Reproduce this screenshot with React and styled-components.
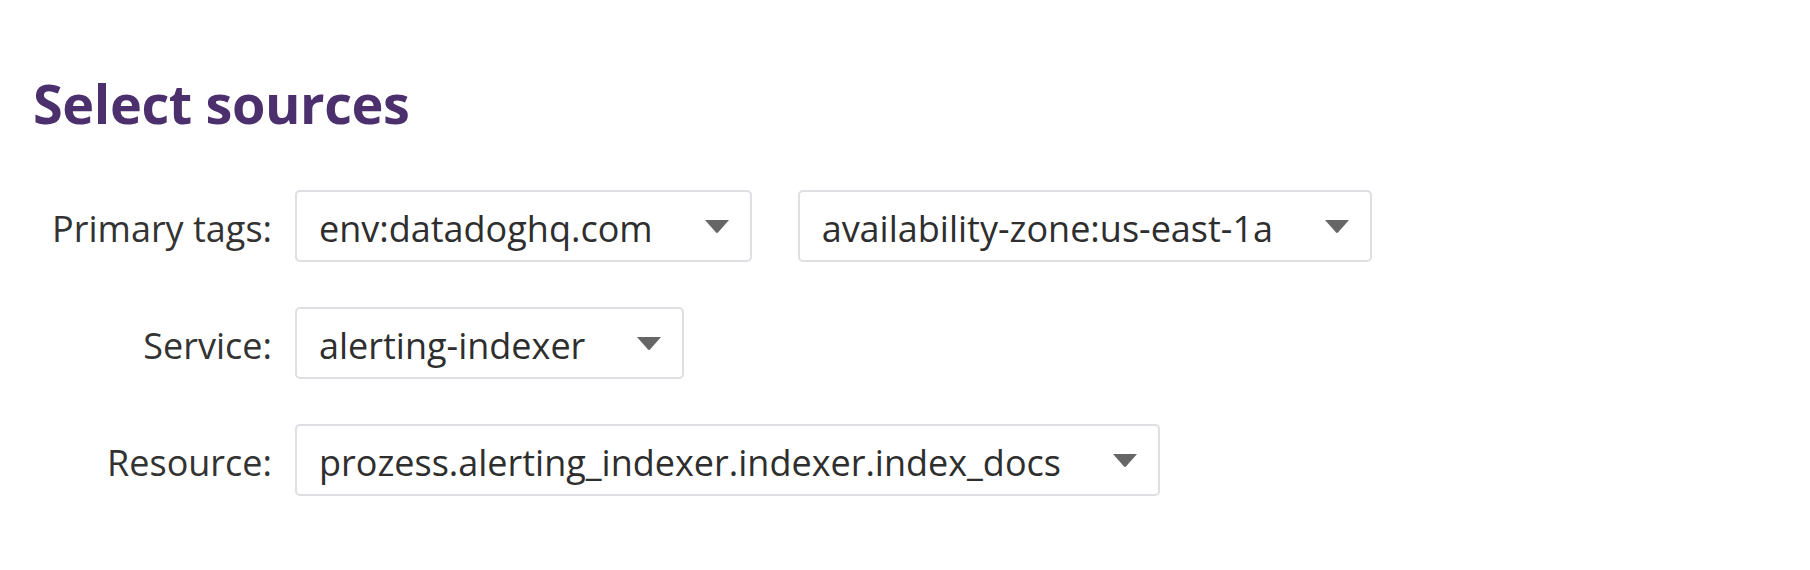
import React from 'react';
import styled, { createGlobalStyle } from 'styled-components';

const GlobalStyle = createGlobalStyle`
    body {
        margin: 0;
        background: #fff;
        font-family: 'Open Sans', 'Liberation Sans', sans-serif;
    }
`;

const Page = styled.div`
    padding: 76px 0 0 33px;
`;

const Title = styled.h2`
    margin: 0 0 60px;
    font-size: 54px;
    line-height: 1;
    font-weight: 700;
    letter-spacing: -0.4px;
    color: #4b306d;
`;

const Form = styled.div`
    display: grid;
    grid-template-columns: 239px auto;
    column-gap: 23px;
    row-gap: 45px;
    justify-content: start;
    align-items: center;
`;

const Label = styled.label`
    padding-top: 4px;
    text-align: right;
    font-size: 36px;
    color: #333;
    white-space: nowrap;
`;

const Controls = styled.div`
    display: flex;
    gap: 46px;
`;

const SelectBox = styled.div`
    display: inline-flex;
    align-items: center;
    gap: 52px;
    box-sizing: border-box;
    height: 72px;
    padding: 0 21px 0 22px;
    border: 2px solid #dfdee3;
    border-radius: 5px;
    background: #fff;
    font-size: 36px;
    color: #2e2e2e;
    white-space: nowrap;
    cursor: pointer;
`;

const Value = styled.span`
    padding-top: 4px;
`;

const Caret = styled.svg`
    flex: none;
    width: 24px;
    height: 13px;
    fill: #666;
`;

const Select = ({ value }) => (
    <SelectBox>
        <Value>{value}</Value>
        <Caret viewBox="0 0 24 13">
            <path d="M0 0 H24 L13 12.5 Q12 13.4 11 12.5 Z" />
        </Caret>
    </SelectBox>
);

const rows = [
    { label: 'Primary tags:', values: ['env:datadoghq.com', 'availability-zone:us-east-1a'] },
    { label: 'Service:', values: ['alerting-indexer'] },
    { label: 'Resource:', values: ['prozess.alerting_indexer.indexer.index_docs'] },
];

const App = () => (
    <Page>
        <GlobalStyle />
        <Title>Select sources</Title>
        <Form>
            {rows.map((row) => (
                <React.Fragment key={row.label}>
                    <Label>{row.label}</Label>
                    <Controls>
                        {row.values.map((v) => (
                            <Select key={v} value={v} />
                        ))}
                    </Controls>
                </React.Fragment>
            ))}
        </Form>
    </Page>
);

export default App;
